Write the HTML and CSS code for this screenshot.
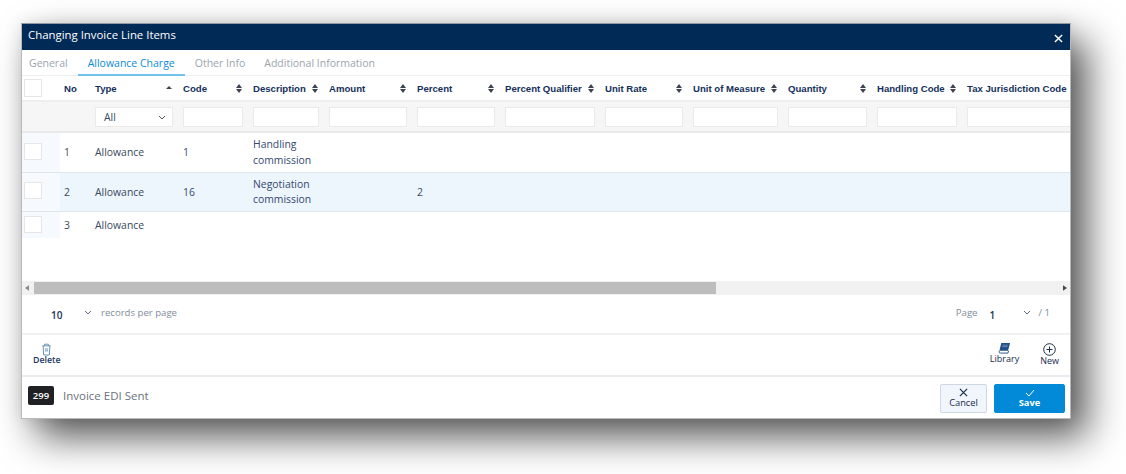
FILE: index.html
```html
<!DOCTYPE html>
<html lang="en">
<head>
<meta charset="utf-8">
<title>Changing Invoice Line Items</title>
<link rel="stylesheet" href="styles.css">
</head>
<body>
<div class="dialog">
  <header class="titlebar">
    <span class="title">Changing Invoice Line Items</span>
    <svg class="close" viewBox="0 0 10 10" width="9" height="9"><path d="M1 1l8 8M9 1l-8 8" stroke="#fff" stroke-width="1.6" fill="none"/></svg>
  </header>
  <nav class="tabs">
    <span class="tab">General</span>
    <span class="tab active">Allowance Charge</span>
    <span class="tab">Other Info</span>
    <span class="tab">Additional Information</span>
  </nav>
  <div class="table">
    <div class="row head">
      <div class="cell"><span class="check"></span></div>
      <div class="cell"><span>No</span></div>
      <div class="cell"><span>Type</span><i class="asc"></i></div>
      <div class="cell"><span>Code</span><i class="sort"></i></div>
      <div class="cell"><span>Description</span><i class="sort"></i></div>
      <div class="cell"><span>Amount</span><i class="sort"></i></div>
      <div class="cell"><span>Percent</span><i class="sort"></i></div>
      <div class="cell"><span>Percent Qualifier</span><i class="sort"></i></div>
      <div class="cell"><span>Unit Rate</span><i class="sort"></i></div>
      <div class="cell"><span>Unit of Measure</span><i class="sort"></i></div>
      <div class="cell"><span>Quantity</span><i class="sort"></i></div>
      <div class="cell"><span>Handling Code</span><i class="sort"></i></div>
      <div class="cell"><span>Tax Jurisdiction Code</span><i class="sort faded"></i></div>
    </div>
    <div class="row filter">
      <div class="cell"></div>
      <div class="cell"></div>
      <div class="cell"><div class="input select"><span>All</span><svg viewBox="0 0 8 5" width="8" height="5"><path d="M1 1l3 3 3-3" stroke="#555" fill="none"/></svg></div></div>
      <div class="cell"><div class="input"></div></div>
      <div class="cell"><div class="input"></div></div>
      <div class="cell"><div class="input"></div></div>
      <div class="cell"><div class="input"></div></div>
      <div class="cell"><div class="input"></div></div>
      <div class="cell"><div class="input"></div></div>
      <div class="cell"><div class="input"></div></div>
      <div class="cell"><div class="input"></div></div>
      <div class="cell"><div class="input"></div></div>
      <div class="cell"><div class="input wide"></div></div>
    </div>
    <div class="row data r1">
      <div class="cell tint"><span class="check"></span></div>
      <div class="cell">1</div>
      <div class="cell">Allowance</div>
      <div class="cell link">1</div>
      <div class="cell link desc">Handling commission</div>
      <div class="cell"></div><div class="cell"></div>
    </div>
    <div class="row data r2">
      <div class="cell tint"><span class="check"></span></div>
      <div class="cell">2</div>
      <div class="cell">Allowance</div>
      <div class="cell link">16</div>
      <div class="cell link desc">Negotiation commission</div>
      <div class="cell"></div>
      <div class="cell">2</div>
    </div>
    <div class="row data r3">
      <div class="cell tint"><span class="check"></span></div>
      <div class="cell">3</div>
      <div class="cell">Allowance</div>
    </div>
  </div>
  <div class="scrollbar">
    <svg class="arrow" viewBox="0 0 5 7" width="4" height="6"><path d="M5 0v7L0 3.500z" fill="#888"/></svg>
    <div class="thumb"></div>
    <svg class="arrow end" viewBox="0 0 5 7" width="4" height="6"><path d="M0 0v7l5-3.500z" fill="#444"/></svg>
  </div>
  <div class="pager">
    <div class="pager-left">
      <b class="num size">10</b>
      <svg viewBox="0 0 8 5" width="8" height="5"><path d="M1 1l3 3 3-3" stroke="#5a6b80" fill="none"/></svg>
      <span class="muted">records per page</span>
    </div>
    <div class="pager-right">
      <span class="muted">Page</span>
      <b class="num page">1</b>
      <svg viewBox="0 0 8 5" width="8" height="5"><path d="M1 1l3 3 3-3" stroke="#5a6b80" fill="none"/></svg>
      <span class="muted">/ 1</span>
    </div>
  </div>
  <div class="toolbar">
    <div class="tool delete">
      <svg viewBox="0 0 12 14" width="11" height="13"><path d="M1.500 3h9M4 3V1.200h4V3M2.300 3l.6 10h6.200l.6-10M4.200 6.500h3.600M4.200 8.500h3.600" stroke="#4a7fa8" stroke-width=".9" fill="none"/></svg>
      <span>Delete</span>
    </div>
    <div class="tools-right">
      <div class="tool library">
        <svg viewBox="0 0 14 13" width="13" height="12"><path d="M3.500 1h9.500l-2.200 8.500H1.500z" fill="#1f4f86"/><path d="M1.500 9.500c-.8 2 .2 2.500 1 2.500h8.300l.6-2.500" stroke="#1f4f86" fill="none"/><path d="M5 3.500h5.500M4.600 5h5.500" stroke="#9fb8d6" stroke-width=".6"/></svg>
        <span>Library</span>
      </div>
      <div class="tool new">
        <svg viewBox="0 0 13 13" width="13" height="13"><circle cx="6.500" cy="6.500" r="5.800" stroke="#1c2f4a" fill="none"/><path d="M6.500 3.500v6M3.500 6.500h6" stroke="#1c2f4a"/></svg>
        <span>New</span>
      </div>
    </div>
  </div>
  <footer class="footer">
    <div class="status">
      <span class="badge">299</span>
      <span class="status-text">Invoice EDI Sent</span>
    </div>
    <div class="actions">
      <button class="btn cancel">
        <svg viewBox="0 0 10 10" width="9" height="9"><path d="M1 1l8 8M9 1l-8 8" stroke="#16294a" stroke-width="1.300" fill="none"/></svg>
        <span>Cancel</span>
      </button>
      <button class="btn save">
        <svg viewBox="0 0 10 8" width="10" height="8"><path d="M1 4l3 3 5-6" stroke="#fff" stroke-width="1" fill="none"/></svg>
        <span>Save</span>
      </button>
    </div>
  </footer>
</div>
</body>
</html>
```
FILE: styles.css
```css
* { box-sizing: border-box; }
html, body { margin: 0; height: 100%; background: #fff; overflow: hidden; }
body { padding: 23px 0 0 21px; font-family: "Open Sans", sans-serif; color: #3a4a5e; }

.dialog {
  width: 1050px;
  height: 396px;
  background: #fff;
  border: 1px solid #b9b9b9;
  border-top-color: #8f99a6;
  display: flex;
  flex-direction: column;
  overflow: hidden;
  box-shadow: 16px 18px 36px rgba(0, 0, 0, .66), 0 0 16px rgba(0, 0, 0, .1);
}

.titlebar {
  height: 26px;
  flex: none;
  background: #012a56;
  display: flex;
  align-items: center;
  justify-content: space-between;
  padding: 0 7px 4px 6px;
}
.title { color: #fff; font-size: 11.400px; line-height: 20px; }
.close { margin-top: 7px; }

.tabs {
  height: 26px;
  flex: none;
  display: flex;
  font-size: 10.500px;
  border-bottom: 1px solid #efefef;
}
.tab { color: #9aa5ad; line-height: 27px; padding-left: 7px; }
.tab.active {
  color: #0b8bd9;
  font-weight: 500;
  padding: 0 10px;
  margin: 0 0 -1px 10px;
  border-bottom: 2px solid #74c0ee;
}
.tab:nth-child(3) { padding-left: 10px; }
.tab:nth-child(4) { padding-left: 19px; }

.table { flex: none; height: 205px; overflow: hidden; }
.row {
  display: grid;
  grid-template-columns: 38px 31px 88px 70px 76px 88px 88px 100px 88px 95px 89px 90px 200px;
  width: 1148px;
}
.cell { padding-left: 4px; padding-right: 5px; display: flex; align-items: center; font-size: 10.400px; min-width: 0; }
.check { width: 18px; height: 18px; background: #fff; border: 1px solid #e6e6e6; display: block; margin-left: -2px; }

.head { height: 26px; border-bottom: 2px solid #eeeeee; }
.head .cell { justify-content: space-between; font-family: "Liberation Sans", sans-serif; font-weight: 700; font-size: 9.600px; color: #14305c; white-space: nowrap; padding-right: 6px; }
.sort, .asc { display: block; width: 7px; height: 9px; flex: none; position: relative; margin-top: 1px; }
.sort::before, .sort::after, .asc::before {
  content: "";
  position: absolute;
  left: 0;
  border-left: 3.500px solid transparent;
  border-right: 3.500px solid transparent;
}
.sort::before, .asc::before { top: 0; border-bottom: 4px solid #3d4450; }
.sort::after { bottom: 0; border-top: 4px solid #3d4450; }
.asc::before { top: 2px; border-left-width: 3px; border-right-width: 3px; border-bottom-width: 3px; }
.faded { opacity: .4; }
.head .cell:last-child { justify-content: flex-start; gap: 3px; }

.filter { height: 31px; background: #f6f6f6; border-bottom: 2px solid #eaeaea; }
.input { width: 100%; height: 20px; background: #fff; border: 1px solid #eaeaea; margin-top: 1px; }
.filter .cell { padding-right: 6px; }
.input.wide { width: 196px; }
.select { display: flex; align-items: center; justify-content: space-between; padding: 0 6px 0 8px; font-size: 10.400px; color: #3a4a5e; }

.data { border-bottom: 1px solid #dfe5ea; color: #3a4a5e; }
.data .check { height: 17px; }
.r1 { height: 40px; }
.r2 { height: 39px; background: #edf5fd; }
.r3 { height: 26px; border-bottom: 0; }
.tint { background: #f6f9fe; }
.r1 .tint { padding-bottom: 3px; }
.r2 .tint { padding-bottom: 4px; }
.r3 .tint { padding-bottom: 1px; }
.r1 .cell:not(.tint):not(.desc) { padding-bottom: 2px; }
.link { color: #33486f; }
.desc { line-height: 15.500px; }

.scrollbar {
  flex: none;
  height: 14px;
  background: #f1f1f1;
  display: flex;
  align-items: center;
  padding-left: 3px;
}
.arrow { flex: none; }
.arrow.end { margin-left: auto; margin-right: 3px; }
.thumb { width: 682px; height: 12px; background: #bdbdbd; margin-left: 5px; }

.pager {
  height: 40px;
  flex: none;
  display: flex;
  justify-content: space-between;
  align-items: center;
  padding: 0 20px 3px 29px;
  border-bottom: 2px solid #eef0f2;
  font-size: 9.600px;
}
.pager-left, .pager-right { display: flex; align-items: center; }
.muted { color: #7f8c9c; }
.num { font-weight: 600; color: #1c3352; font-size: 10px; margin-top: 4px; }
.size { width: 33px; }
.pager-left svg { margin-right: 9px; }
.page { width: 33px; margin-left: 12px; }
.pager-right svg { margin-right: 8px; }

.toolbar {
  height: 42px;
  flex: none;
  display: flex;
  justify-content: space-between;
  align-items: center;
  padding: 0 11px 4px 11px;
  border-bottom: 2px solid #e8ebf0;
}
.tools-right { display: flex; gap: 21px; align-items: flex-end; }
.tool { display: flex; flex-direction: column; align-items: center; font-size: 8.800px; color: #1c3a63; line-height: 9px; font-weight: 600; }
.tool.delete { margin-top: 1px; }
.tool.library, .tool.new { font-weight: 400; color: #16294a; font-size: 9px; }
.tool.library { margin-bottom: 2px; }
.tool.new svg { margin-top: 1px; }

.footer {
  flex: 1;
  display: flex;
  justify-content: space-between;
  align-items: center;
  padding: 0 5px 0 6px;
}
.status { display: flex; align-items: center; gap: 9px; margin-bottom: 4px; }
.badge {
  width: 26px;
  height: 19px;
  background: #202124;
  color: #fff;
  border-radius: 2px;
  font-size: 9.500px;
  font-weight: 600;
  display: flex;
  align-items: center;
  justify-content: center;
}
.status-text { font-size: 11.500px; color: #6a7280; }
.actions { display: flex; gap: 7px; margin-top: 1px; }
.btn {
  height: 29px;
  border-radius: 2px;
  display: flex;
  flex-direction: column;
  align-items: center;
  justify-content: center;
  font-family: "Open Sans", sans-serif;
  font-size: 9.300px;
  line-height: 10px;
  padding: 0;
}
.btn svg { margin-bottom: 1px; }
.cancel { width: 47px; background: #f1f6fd; border: 1px solid #cfd7e2; color: #16294a; }
.save { width: 71px; background: #028ad8; border: 1px solid #028ad8; color: #fff; font-weight: 700; }
```
